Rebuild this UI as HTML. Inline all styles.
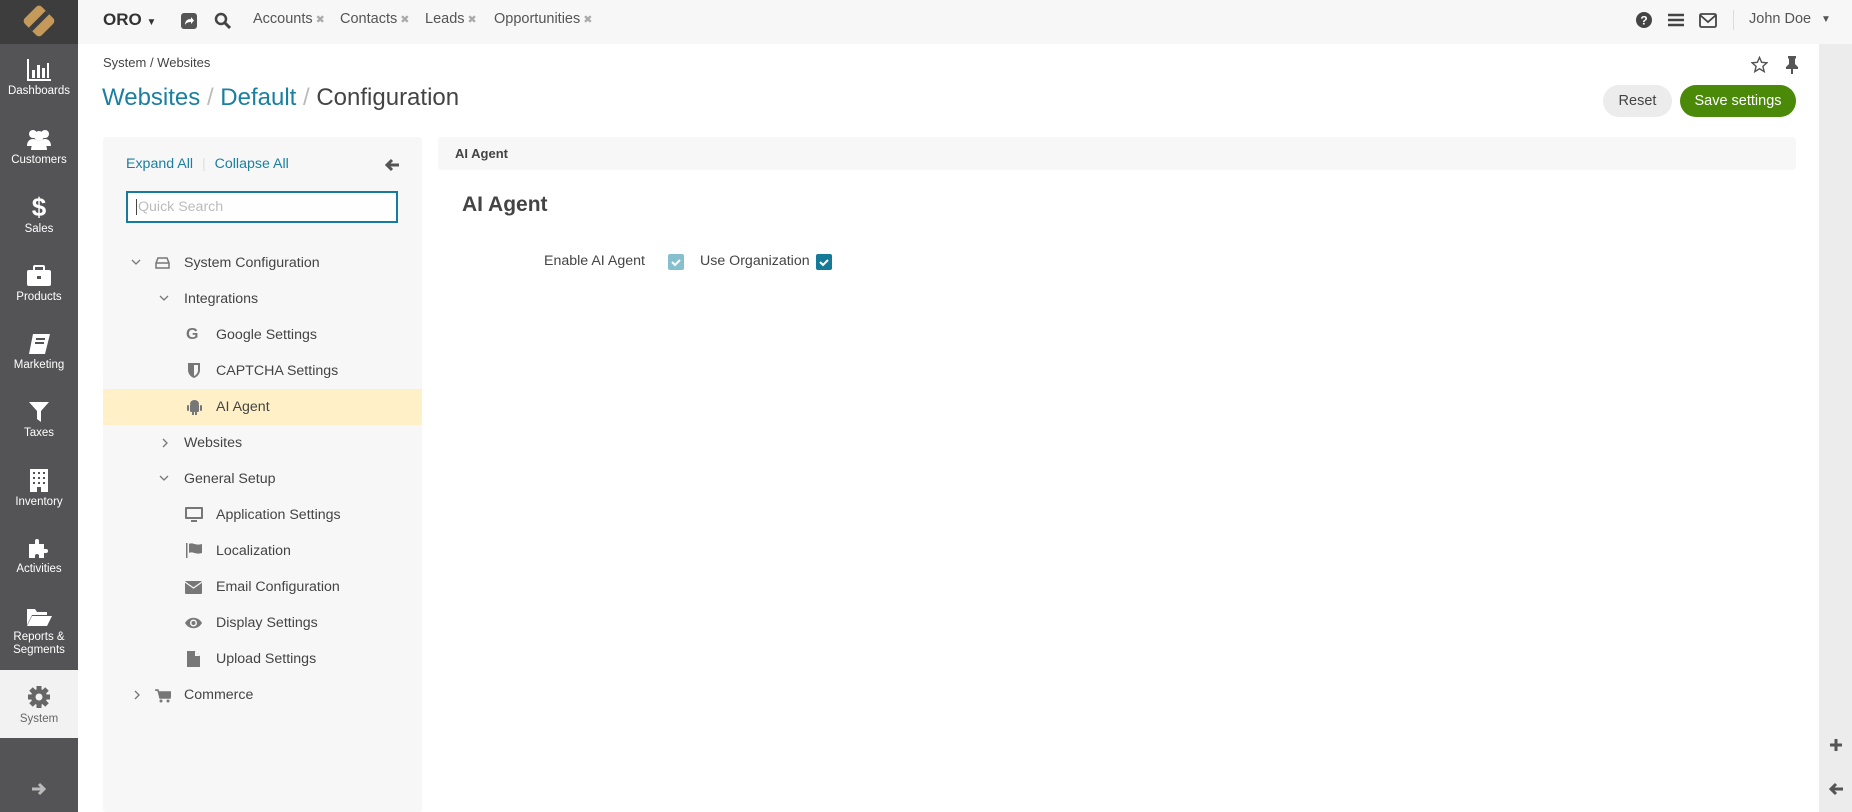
<!DOCTYPE html>
<html><head><meta charset="utf-8"><style>
*{box-sizing:border-box;margin:0;padding:0}
body{width:1852px;height:812px;overflow:hidden;font-family:"Liberation Sans",sans-serif;background:#fff;position:relative;color:#444}
.abs{position:absolute}
#side{left:0;top:0;width:78px;height:812px;background:#545456}
#logo{left:0;top:0;width:78px;height:44px;background:#3d3d3d}
.nav{position:absolute;left:0;width:78px;text-align:center;color:#fff;font-size:11.5px;line-height:13px}
.nav svg{display:block;margin:0 auto 4px}
#top{left:78px;top:0;width:1774px;height:44px;background:#f7f7f7}
.tt{position:absolute;top:11px;font-size:14.5px;color:#555}
.x{color:#aaa;font-size:11px;margin-left:3px}
#rbar{left:1819px;top:44px;width:33px;height:768px;background:#ececec}
#panel{left:103px;top:137px;width:319px;height:675px;background:#f7f7f7;border-radius:3px}
.row{position:absolute;left:0;width:319px;height:36px;font-size:14.2px;color:#444;line-height:36px}
.row span{position:absolute}
.chev{position:absolute;top:13px}
.ic{position:absolute;top:10px}
</style></head><body>
<div id="side" class="abs"></div>
<div id="logo" class="abs"><svg width="78" height="44"><g transform="translate(39,21) rotate(45)"><rect x="-12" y="-12" width="24" height="24" rx="4" fill="#c4995a"/><rect x="-12" y="-2.5" width="24" height="5" fill="#3d3d3d" transform="rotate(-90)"/></g></svg></div>

<div class="nav" style="top:59px"><svg width="24" height="22" viewBox="0 0 24 22"><path d="M1 0v21h23" stroke="#fff" stroke-width="2" fill="none"/><rect x="5" y="11" width="3" height="8" fill="#fff"/><rect x="10" y="6" width="3" height="13" fill="#fff"/><rect x="15" y="9" width="3" height="10" fill="#fff"/><rect x="20" y="4" width="2" height="15" fill="#fff"/></svg>Dashboards</div>
<div class="nav" style="top:128px"><svg width="26" height="22" viewBox="0 0 26 22"><circle cx="7" cy="6" r="4" fill="#fff"/><circle cx="19" cy="6" r="4" fill="#fff"/><circle cx="13" cy="8" r="5" fill="#fff"/><path d="M1 18c0-5 3-7 6-7s4 2 6 2 3-2 6-2 6 2 6 7z" fill="#fff"/><path d="M5 22c0-6 4-9 8-9s8 3 8 9z" fill="#fff"/></svg>Customers</div>
<div class="nav" style="top:195px"><svg width="16" height="24" viewBox="0 0 16 24"><text x="8" y="21" text-anchor="middle" font-size="26" font-weight="bold" fill="#fff" font-family="Liberation Sans">$</text></svg>Sales</div>
<div class="nav" style="top:265px"><svg width="26" height="22" viewBox="0 0 26 22"><rect x="8" y="1" width="10" height="6" rx="1" fill="none" stroke="#fff" stroke-width="2"/><rect x="1" y="5" width="24" height="16" rx="2" fill="#fff"/><rect x="11" y="11" width="4" height="3" fill="#545456"/></svg>Products</div>
<div class="nav" style="top:333px"><svg width="24" height="22" viewBox="0 0 24 22"><path d="M6 1h17l-5 20H2z" fill="#fff"/><path d="M9 6h9M8 10h9" stroke="#545456" stroke-width="2"/></svg>Marketing</div>
<div class="nav" style="top:401px"><svg width="22" height="22" viewBox="0 0 22 22"><path d="M1 1h20l-8 9v11l-4-3v-8z" fill="#fff"/></svg>Taxes</div>
<div class="nav" style="top:468px"><svg width="20" height="24" viewBox="0 0 20 24"><rect x="1" y="1" width="18" height="23" fill="#fff"/><g fill="#545456"><rect x="4" y="4" width="2" height="2"/><rect x="9" y="4" width="2" height="2"/><rect x="14" y="4" width="2" height="2"/><rect x="4" y="9" width="2" height="2"/><rect x="9" y="9" width="2" height="2"/><rect x="14" y="9" width="2" height="2"/><rect x="4" y="14" width="2" height="2"/><rect x="9" y="14" width="2" height="2"/><rect x="14" y="14" width="2" height="2"/><rect x="8" y="19" width="4" height="5"/></g></svg>Inventory</div>
<div class="nav" style="top:537px"><svg width="24" height="22" viewBox="0 0 24 22"><path d="M2 7h6V4a2 2 0 014 0v3h5v5h2a2 2 0 010 4h-2v5h-5v-2a2 2 0 00-4 0v2H2z" fill="#fff"/></svg>Activities</div>
<div class="nav" style="top:607px"><svg width="26" height="20" viewBox="0 0 26 20"><path d="M1 2h8l2 3h10v3H6L1 18z" fill="#fff"/><path d="M6 9h20l-5 10H1z" fill="#fff"/></svg>Reports &amp;<br>Segments</div>
<div class="abs" style="left:0;top:670px;width:78px;height:68px;background:#f2f2f2"></div>
<div class="nav" style="top:685px;color:#666"><svg width="24" height="24" viewBox="0 0 24 24"><circle cx="12" cy="12" r="8" fill="#666"/><g stroke="#666" stroke-width="5"><path d="M12 1v22M1 12h22M4 4l16 16M20 4L4 20"/></g><circle cx="12" cy="12" r="3.5" fill="#f2f2f2"/></svg>System</div>
<svg class="abs" style="left:31px;top:782px" width="16" height="14" viewBox="0 0 16 14"><path d="M1 7h12M8 2l5 5-5 5" stroke="#bbb" stroke-width="3" fill="none"/></svg>

<div id="top" class="abs">
<div class="tt" style="left:25px;font-weight:bold;font-size:17px;color:#333;top:10px">ORO <span style="font-size:10px">▼</span></div>
<svg class="abs" style="left:103px;top:13px" width="16" height="16" viewBox="0 0 16 16"><rect width="16" height="16" rx="3" fill="#555"/><path d="M4 12c0-4 2-6 6-6V4l3 3.5-3 3.5V9c-3 0-5 1-6 3z" fill="#fff"/></svg>
<svg class="abs" style="left:136px;top:12px" width="17" height="17" viewBox="0 0 17 17"><circle cx="7" cy="7" r="5" stroke="#444" stroke-width="2.5" fill="none"/><path d="M11 11l5 5" stroke="#444" stroke-width="3"/></svg>
<div class="tt" style="left:175px">Accounts<span class="x">✖</span></div>
<div class="tt" style="left:262px">Contacts<span class="x">✖</span></div>
<div class="tt" style="left:347px">Leads<span class="x">✖</span></div>
<div class="tt" style="left:416px">Opportunities<span class="x">✖</span></div>
<svg class="abs" style="left:1558px;top:12px" width="16" height="16" viewBox="0 0 16 16"><circle cx="8" cy="8" r="8" fill="#444"/><text x="8" y="12.5" text-anchor="middle" font-size="12" font-weight="bold" fill="#fff" font-family="Liberation Sans">?</text></svg>
<svg class="abs" style="left:1590px;top:13px" width="16" height="14"><path d="M0 2h16M0 7h16M0 12h16" stroke="#444" stroke-width="2.5"/></svg>
<svg class="abs" style="left:1621px;top:13px" width="18" height="15"><rect x="1" y="1" width="16" height="13" rx="1.5" fill="none" stroke="#444" stroke-width="1.8"/><path d="M1 2l8 7 8-7" fill="none" stroke="#444" stroke-width="1.8"/></svg>
<div class="abs" style="left:1655px;top:10px;width:1px;height:20px;background:#ddd"></div>
<div class="tt" style="left:1671px">John Doe</div>
<div class="tt" style="left:1743px;font-size:10px;top:14px">▼</div>
</div>

<div id="rbar" class="abs"></div>
<svg class="abs" style="left:1829px;top:738px" width="14" height="14"><path d="M7 1v12M1 7h12" stroke="#555" stroke-width="3"/></svg>
<svg class="abs" style="left:1828px;top:782px" width="16" height="14" viewBox="0 0 16 14"><path d="M15 7H3M8 2L3 7l5 5" stroke="#555" stroke-width="3" fill="none"/></svg>

<div class="abs" style="left:103px;top:55px;font-size:13px;color:#444">System / Websites</div>
<div class="abs" style="left:102px;top:84px;font-size:24px;color:#1a7fa0">Websites <span style="color:#bbb">/</span> Default <span style="color:#bbb">/</span> <span style="color:#444">Configuration</span></div>
<svg class="abs" style="left:1751px;top:56px" width="17" height="17" viewBox="0 0 24 24"><path d="M12 2l3 7 7.5.6-5.7 5 1.8 7.4L12 18l-6.6 4 1.8-7.4-5.7-5L9 9z" fill="none" stroke="#555" stroke-width="2"/></svg>
<svg class="abs" style="left:1785px;top:56px" width="14" height="18" viewBox="0 0 14 18"><path d="M3 0h8v2l-1 1v5l3 3v2H8v5H6v-5H1v-2l3-3V3L3 2z" fill="#555"/></svg>
<div class="abs" style="left:1603px;top:85px;width:69px;height:32px;border-radius:16px;background:#ececec;font-size:14.5px;line-height:32px;text-align:center;color:#444">Reset</div>
<div class="abs" style="left:1680px;top:85px;width:116px;height:32px;border-radius:16px;background:#4a8a08;font-size:14.5px;line-height:32px;text-align:center;color:#fff">Save settings</div>

<div id="panel" class="abs">
<div class="abs" style="left:23px;top:19px;font-size:14.2px;color:#1a7fa0">Expand All <span style="color:#ddd;margin:0 5px">|</span> Collapse All</div>
<svg class="abs" style="left:281px;top:21px" width="16" height="14" viewBox="0 0 16 14"><path d="M15 7H3M8 2L3 7l5 5" stroke="#555" stroke-width="3" fill="none"/></svg>
<div class="abs" style="left:23px;top:54px;width:272px;height:32px;border:2px solid #177c9b;background:#fff;font-size:14.2px;color:#bbb;padding-left:8px;line-height:28px"><span style="border-left:1px solid #444;padding-left:1px">Quick Search</span></div>

<div class="row" style="top:108px"><svg class="chev" style="left:28px" width="10" height="8"><path d="M1 2l4 4 4-4" stroke="#777" stroke-width="1.3" fill="none"/></svg><svg class="ic" style="left:52px;top:12px" width="15" height="12"><path d="M3 1h9l2 5v5H1V6z" fill="none" stroke="#777" stroke-width="1.5"/><path d="M1 6h13" stroke="#777" stroke-width="1.5"/></svg><span style="left:81px">System Configuration</span></div>
<div class="row" style="top:144px"><svg class="chev" style="left:56px" width="10" height="8"><path d="M1 2l4 4 4-4" stroke="#777" stroke-width="1.3" fill="none"/></svg><span style="left:81px">Integrations</span></div>
<div class="row" style="top:180px"><span style="left:83px;font-weight:bold;color:#777;font-size:16px">G</span><span style="left:113px">Google Settings</span></div>
<div class="row" style="top:216px"><svg class="ic" style="left:85px" width="12" height="15"><path d="M0 0h12v7c0 4-3 7-6 8-3-1-6-4-6-8z" fill="#777"/><path d="M6 2h4v5c0 3-2 5-4 6z" fill="#f7f7f7"/></svg><span style="left:113px">CAPTCHA Settings</span></div>
<div class="row" style="top:252px;background:#fff0c7"><svg class="ic" style="left:84px" width="15" height="16"><rect x="3" y="5" width="9" height="8" rx="1" fill="#777"/><path d="M3 5a4.5 4 0 019 0z" fill="#777"/><rect x="0" y="6" width="2" height="6" rx="1" fill="#777"/><rect x="13" y="6" width="2" height="6" rx="1" fill="#777"/><rect x="5" y="12" width="2" height="4" fill="#777"/><rect x="8" y="12" width="2" height="4" fill="#777"/></svg><span style="left:113px">AI Agent</span></div>
<div class="row" style="top:288px"><svg class="chev" style="left:58px;top:13px" width="8" height="10"><path d="M2 1l4 4-4 4" stroke="#777" stroke-width="1.3" fill="none"/></svg><span style="left:81px">Websites</span></div>
<div class="row" style="top:324px"><svg class="chev" style="left:56px" width="10" height="8"><path d="M1 2l4 4 4-4" stroke="#777" stroke-width="1.3" fill="none"/></svg><span style="left:81px">General Setup</span></div>
<div class="row" style="top:360px"><svg class="ic" style="left:82px" width="18" height="16"><rect x="0" y="0" width="18" height="12" rx="1" fill="#777"/><rect x="2" y="2" width="14" height="8" fill="#f7f7f7"/><rect x="6" y="13" width="6" height="2" fill="#777"/></svg><span style="left:113px">Application Settings</span></div>
<div class="row" style="top:396px"><svg class="ic" style="left:83px" width="17" height="15"><rect x="0" y="0" width="1.5" height="15" fill="#777"/><path d="M3 1c4-2 6 2 13 0v9c-7 2-9-2-13 0z" fill="#777"/></svg><span style="left:113px">Localization</span></div>
<div class="row" style="top:432px"><svg class="ic" style="left:82px;top:12px" width="17" height="13"><rect width="17" height="13" rx="1" fill="#777"/><path d="M0 1l8.5 6L17 1" fill="none" stroke="#f7f7f7" stroke-width="1.3"/></svg><span style="left:113px">Email Configuration</span></div>
<div class="row" style="top:468px"><svg class="ic" style="left:82px;top:12px" width="17" height="12"><path d="M0 6c4-7 13-7 17 0-4 7-13 7-17 0z" fill="#777"/><circle cx="8.5" cy="6" r="3.5" fill="#f7f7f7"/><circle cx="8.5" cy="6" r="2" fill="#777"/></svg><span style="left:113px">Display Settings</span></div>
<div class="row" style="top:504px"><svg class="ic" style="left:84px" width="13" height="16"><path d="M0 0h8l5 5v11H0z" fill="#777"/><path d="M8 0v5h5" fill="#f7f7f7"/></svg><span style="left:113px">Upload Settings</span></div>
<div class="row" style="top:540px"><svg class="chev" style="left:30px;top:13px" width="8" height="10"><path d="M2 1l4 4-4 4" stroke="#777" stroke-width="1.3" fill="none"/></svg><svg class="ic" style="left:52px;top:12px" width="16" height="14"><path d="M0 1h3l2 8h10l1-6H4" fill="#777" stroke="#777" stroke-width="1.5"/><circle cx="6" cy="12" r="1.5" fill="#777"/><circle cx="13" cy="12" r="1.5" fill="#777"/></svg><span style="left:81px">Commerce</span></div>
</div>

<div class="abs" style="left:438px;top:137px;width:1358px;height:33px;background:#f7f7f7;border-radius:3px;font-size:13px;font-weight:bold;line-height:33px;padding-left:17px;color:#444">AI Agent</div>
<div class="abs" style="left:462px;top:193px;font-size:21px;font-weight:bold;color:#444">AI Agent</div>
<div class="abs" style="left:544px;top:253px;font-size:14.2px;color:#444">Enable AI Agent</div>
<svg class="abs" style="left:668px;top:254px" width="16" height="16"><rect width="16" height="16" rx="2" fill="#86c0cf"/><path d="M4 8l3 3 5-5" stroke="#fff" stroke-width="2" fill="none"/></svg>
<div class="abs" style="left:700px;top:253px;font-size:14.2px;color:#444">Use Organization</div>
<svg class="abs" style="left:816px;top:254px" width="16" height="16"><rect width="16" height="16" rx="2" fill="#157a98"/><path d="M4 8l3 3 5-5" stroke="#fff" stroke-width="2" fill="none"/></svg>
</body></html>
